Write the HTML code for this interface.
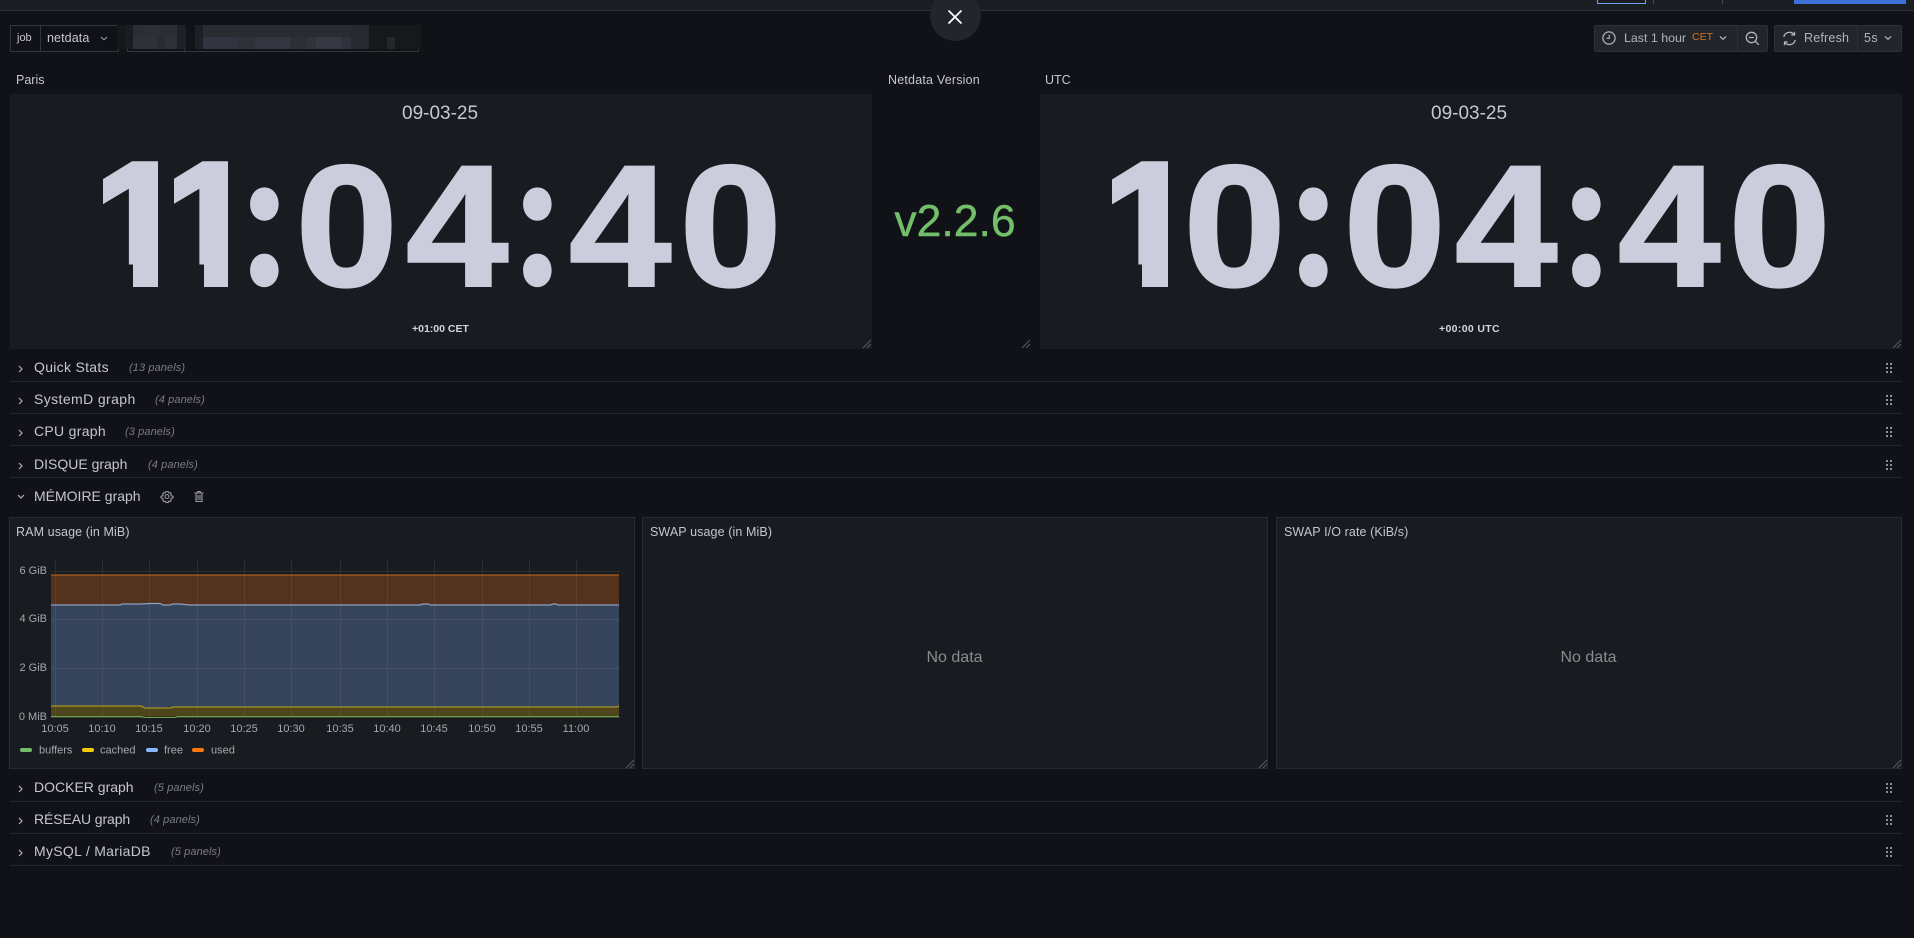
<!DOCTYPE html>
<html lang="en"><head><meta charset="utf-8"><title>Netdata dashboard</title>
<style>
*{box-sizing:border-box}
html,body{margin:0;padding:0;background:#111217;width:1914px;height:938px;overflow:hidden;font-family:"Liberation Sans",sans-serif;color:#ccccdc}
.a{position:absolute;white-space:nowrap}
.panel{position:absolute;background:#181b1f}
.title{position:absolute;font-size:12.5px;color:#c6c6d2;line-height:16px;white-space:nowrap}
.row{position:absolute;left:34px;font-size:14px;letter-spacing:.3px;color:#c6c6d2;line-height:18px;white-space:nowrap}
.cnt{position:absolute;font-size:11px;font-style:italic;color:#7b7c84;line-height:14px;letter-spacing:.1px;white-space:nowrap}
.line{position:absolute;left:10px;width:1892px;height:1px;background:#24262b}
.btn{position:absolute;background:#22252b;border:1px solid #2e3036;top:25px;height:27px}
.bt{position:absolute;font-size:12.5px;color:#b4b5bc;line-height:16px;white-space:nowrap;top:30px}
.noData{position:absolute;font-size:16px;color:#8a8b91;line-height:20px;white-space:nowrap}
.bx{position:absolute;background:#181b1f;border:1px solid #282a2f}
</style></head><body>

<div class="a" style="left:0;top:0;width:1914px;height:10px;background:#1a1d22"></div>
<div class="a" style="left:0;top:10px;width:1914px;height:1px;background:#2c2e34"></div>
<div class="a" style="left:1597px;top:0;width:49px;height:4px;border:1px solid #6e9fff;border-top:0"></div>
<div class="a" style="left:1653px;top:0;width:1px;height:4px;background:#44464c"></div>
<div class="a" style="left:1722px;top:0;width:1px;height:4px;background:#44464c"></div>
<div class="a" style="left:1794px;top:0;width:112px;height:4px;background:#3d71d9"></div>

<!-- close -->
<div class="a" style="left:930px;top:-10px;width:51px;height:51px;border-radius:50%;background:#22252b"></div>
<svg class="a" style="left:947px;top:9px" width="16" height="16" viewBox="0 0 16 16"><path d="M1.5 1.5 14.500 14.500M14.500 1.500 1.500 14.500" stroke="#fff" stroke-width="1.8" fill="none"/></svg>

<!-- variables -->
<div class="a" style="left:10px;top:25px;width:31px;height:27px;background:#111217;border:1px solid #33353b"></div>
<div class="a" style="left:17px;top:30px;font-size:11px;line-height:16px;color:#c6c7ce">job</div>
<div class="a" style="left:40px;top:25px;width:79px;height:27px;background:#111217;border:1px solid #33353b"></div>
<div class="a" style="left:47px;top:30px;font-size:12.500px;line-height:16px;letter-spacing:.1px;color:#c6c7ce">netdata</div>
<svg class="a" style="left:100px;top:34px" width="8" height="8" viewBox="0 0 8 8"><path d="M1 3 4 5.800 7 3" stroke="#9a9ba2" stroke-width="1" fill="none"/></svg>
<div class="a" style="left:127px;top:51px;width:292px;height:1px;background:#34363c"></div>
<div class="a" style="left:127px;top:48px;width:1px;height:4px;background:#34363c"></div>
<div class="a" style="left:184px;top:48px;width:1px;height:4px;background:#34363c"></div>
<div class="a" style="left:418px;top:48px;width:1px;height:4px;background:#34363c"></div>
<!-- pixelated blur -->
<svg class="a" style="left:117px;top:25px" width="304" height="24" shape-rendering="crispEdges">
<rect width="304" height="24" fill="#16181c"/>
<rect x="0" y="0" width="8" height="24" fill="#15171b"/>
<rect x="8" y="0" width="8" height="24" fill="#191c20"/>
<rect x="16" y="0" width="44" height="12" fill="#2a2d33"/><rect x="16" y="12" width="44" height="12" fill="#2e3137"/>
<rect x="27" y="0" width="16" height="12" fill="#2c2f34"/><rect x="40" y="12" width="8" height="12" fill="#2a2c32"/>
<rect x="60" y="0" width="9" height="24" fill="#1c2127"/>
<rect x="69" y="0" width="9" height="24" fill="#111317"/>
<rect x="78" y="0" width="8" height="24" fill="#1c1f25"/>
<rect x="86" y="0" width="166" height="12" fill="#2a2c32"/>
<rect x="86" y="12" width="35" height="12" fill="#323540"/>
<rect x="121" y="12" width="17" height="12" fill="#2e3138"/>
<rect x="138" y="12" width="35" height="12" fill="#343640"/>
<rect x="173" y="12" width="17" height="12" fill="#2d2f34"/>
<rect x="190" y="12" width="9" height="12" fill="#30333b"/>
<rect x="199" y="12" width="26" height="12" fill="#363942"/>
<rect x="225" y="12" width="9" height="12" fill="#2f323b"/>
<rect x="234" y="0" width="18" height="24" fill="#27292e"/>
<rect x="270" y="12" width="8" height="12" fill="#24262a"/>
</svg>

<!-- time controls -->
<div class="btn" style="left:1594px;width:144px;border-radius:2px 0 0 2px"></div>
<div class="btn" style="left:1737px;width:31px;border-radius:0 2px 2px 0"></div>
<div class="btn" style="left:1774px;width:84px;border-radius:2px 0 0 2px"></div>
<div class="btn" style="left:1857px;width:45px;border-radius:0 2px 2px 0"></div>
<svg class="a" style="left:1602px;top:31px" width="14" height="14" viewBox="0 0 14 14"><circle cx="7" cy="7" r="6.100" stroke="#b4b5bc" stroke-width="1.200" fill="none"/><path d="M7.300 3.800V7.300H4.500" stroke="#b4b5bc" stroke-width="1.200" fill="none"/></svg>
<div class="bt" style="left:1624px;font-size:12.400px">Last 1 hour</div>
<div class="a" style="left:1692px;top:30px;font-size:10.500px;line-height:14px;color:#d3761f">CET</div>
<svg class="a" style="left:1719px;top:34px" width="8" height="8" viewBox="0 0 8 8"><path d="M1 2.500 4 5.300 7 2.500" stroke="#b4b5bc" stroke-width="1.200" fill="none"/></svg>
<svg class="a" style="left:1745px;top:31px" width="15" height="15" viewBox="0 0 15 15"><circle cx="6.500" cy="6.500" r="5.200" stroke="#b4b5bc" stroke-width="1.300" fill="none"/><path d="M4 6.500H9M10.300 10.300 13.800 13.800" stroke="#b4b5bc" stroke-width="1.300" fill="none"/></svg>
<svg class="a" style="left:1782px;top:31px" width="15" height="15" viewBox="0 0 15 15"><path d="M1.800 6A5.800 5.800 0 0 1 12 3.500M13.200 9A5.800 5.800 0 0 1 3 11.500" stroke="#b4b5bc" stroke-width="1.300" fill="none"/><path d="M12.500 .8V4H9.300M2.500 14.200V11H5.700" stroke="#b4b5bc" stroke-width="1.300" fill="none"/></svg>
<div class="bt" style="left:1804px;letter-spacing:.2px">Refresh</div>
<div class="bt" style="left:1864px;letter-spacing:.4px">5s</div>
<svg class="a" style="left:1884px;top:34px" width="8" height="8" viewBox="0 0 8 8"><path d="M1 2.500 4 5.300 7 2.500" stroke="#b4b5bc" stroke-width="1.200" fill="none"/></svg>

<!-- top panels -->
<div class="panel" style="left:10px;top:94px;width:862px;height:255px"></div>
<div class="panel" style="left:1040px;top:94px;width:862px;height:255px"></div>
<div class="title" style="left:16px;top:72px">Paris</div>
<div class="title" style="left:888px;top:72px;letter-spacing:.2px">Netdata Version</div>
<div class="title" style="left:1045px;top:72px">UTC</div>
<div class="a" style="left:402px;top:103px;font-size:19px;line-height:22px;color:#c7c7d4">09-03-25</div>
<div class="a" style="left:1431px;top:103px;font-size:19px;line-height:22px;color:#c7c7d4">09-03-25</div>
<div class="a" style="left:412px;top:322px;font-size:10.500px;font-weight:700;line-height:14px;color:#d5d5e0">+01:00 CET</div>
<div class="a" style="left:1439px;top:322px;font-size:10.500px;font-weight:700;line-height:14px;letter-spacing:.35px;color:#d5d5e0">+00:00 UTC</div>

<svg class="a" style="left:0;top:0" width="1914" height="360">
<defs><clipPath id="nofoot" clipPathUnits="userSpaceOnUse">
<rect x="103" y="150" width="55" height="114.500"/>
<rect x="174" y="150" width="54" height="114.500"/>
<rect x="1112" y="150" width="56" height="114.500"/>
<rect x="133" y="264" width="25" height="23"/>
<rect x="204" y="264" width="24" height="23"/>
<rect x="1142" y="264" width="26" height="23"/>
</clipPath></defs>
<g font-family="Liberation Sans" font-weight="700" fill="#ccccdc">
<g clip-path="url(#nofoot)">
<g font-size="188" stroke="#ccccdc" stroke-width="5" transform="translate(0,286.500) scale(1,.95)">
<text y="0" x="87.500 158">11</text>
<text y="0" x="1097">1</text>
</g>
</g>
<g font-size="184" stroke="#ccccdc" stroke-width="2.500" transform="translate(0,285.800) scale(1,.94)">
<text y="0" x="295.500 406">04</text>
<text y="0" x="569 679.500">40</text>
<text y="0" x="1183.500">0</text>
<text y="0" x="1343.500 1455">04</text>
<text y="0" x="1618 1728.500">40</text>
</g>
</g>
<g font-family="Noto Sans CJK JP" font-weight="700" font-size="188" fill="#ccccdc">
<text transform="translate(239,284.700) scale(.83,.93)">:</text>
<text transform="translate(512,284.700) scale(.83,.93)">:</text>
<text transform="translate(1288,284.700) scale(.83,.93)">:</text>
<text transform="translate(1561,284.700) scale(.83,.93)">:</text>
</g>
<text x="955" y="236" text-anchor="middle" font-family="Liberation Sans" font-size="44.500" fill="#73bf69" stroke="#73bf69" stroke-width=".4">v2.2.6</text>
<g stroke="#5a5c62" stroke-width="1" fill="none">
<path d="M863 348 871 340M867 348 871 344"/><path d="M1022 348 1030 340M1026 348 1030 344"/><path d="M1893 348 1901 340M1897 348 1901 344"/>
</g>
</svg>

<!-- rows -->
<div class="row" style="top:358px">Quick Stats</div><div class="cnt" style="left:129px;top:361px">(13 panels)</div>
<div class="row" style="top:390px;letter-spacing:.4px">SystemD graph</div><div class="cnt" style="left:155px;top:393px">(4 panels)</div>
<div class="row" style="top:422px">CPU graph</div><div class="cnt" style="left:125px;top:425px">(3 panels)</div>
<div class="row" style="top:455px;letter-spacing:0">DISQUE graph</div><div class="cnt" style="left:148px;top:458px">(4 panels)</div>
<div class="row" style="top:487px;letter-spacing:0">MÉMOIRE graph</div>
<div class="row" style="top:778px;letter-spacing:0">DOCKER graph</div><div class="cnt" style="left:154px;top:781px">(5 panels)</div>
<div class="row" style="top:810px;letter-spacing:-.1px">RÉSEAU graph</div><div class="cnt" style="left:150px;top:813px">(4 panels)</div>
<div class="row" style="top:842px">MySQL / MariaDB</div><div class="cnt" style="left:171px;top:845px">(5 panels)</div>
<div class="line" style="top:381px"></div><div class="line" style="top:413px"></div><div class="line" style="top:445px"></div><div class="line" style="top:477px"></div>
<div class="line" style="top:801px"></div><div class="line" style="top:833px"></div><div class="line" style="top:865px"></div>

<svg class="a" style="left:0;top:350px" width="1914" height="530">
<g stroke="#b0b1b8" stroke-width="1.200" fill="none">
<path d="M19 16 22 19 19 22"/><path d="M19 48 22 51 19 54"/><path d="M19 80 22 83 19 86"/><path d="M19 113 22 116 19 119"/>
<path d="M18 145 21 148 24 145"/>
<path d="M19 436 22 439 19 442"/><path d="M19 468 22 471 19 474"/><path d="M19 500 22 503 19 506"/>
</g>
<g stroke="#9a9ba2" stroke-width="1.100" fill="none">
<circle cx="167" cy="146.500" r="2"/>
<path d="M167 141.500l1.200 .2 .6 1.200 1.400-.3 1 1-.4 1.300 .9 1 1.300 .5v1.300l-1.300 .5-.9 1 .4 1.300-1 1-1.400-.3-.6 1.200h-2.400l-.6-1.200-1.400 .3-1-1 .4-1.300-.9-1-1.300-.5v-1.300l1.300-.5 .9-1-.4-1.300 1-1 1.400 .3 .6-1.200z"/>
<path d="M194.500 143H203.500M196 143V151.500H202V143M197.700 143V141.500H200.300V143M198 145V150M200 145V150"/>
</g>
<g fill="#8e8f96">
<rect x="1886" y="13" width="2" height="2"/><rect x="1890" y="13" width="2" height="2"/><rect x="1886" y="17" width="2" height="2"/><rect x="1890" y="17" width="2" height="2"/><rect x="1886" y="21" width="2" height="2"/><rect x="1890" y="21" width="2" height="2"/>
<rect x="1886" y="45" width="2" height="2"/><rect x="1890" y="45" width="2" height="2"/><rect x="1886" y="49" width="2" height="2"/><rect x="1890" y="49" width="2" height="2"/><rect x="1886" y="53" width="2" height="2"/><rect x="1890" y="53" width="2" height="2"/>
<rect x="1886" y="77" width="2" height="2"/><rect x="1890" y="77" width="2" height="2"/><rect x="1886" y="81" width="2" height="2"/><rect x="1890" y="81" width="2" height="2"/><rect x="1886" y="85" width="2" height="2"/><rect x="1890" y="85" width="2" height="2"/>
<rect x="1886" y="110" width="2" height="2"/><rect x="1890" y="110" width="2" height="2"/><rect x="1886" y="114" width="2" height="2"/><rect x="1890" y="114" width="2" height="2"/><rect x="1886" y="118" width="2" height="2"/><rect x="1890" y="118" width="2" height="2"/>
<rect x="1886" y="433" width="2" height="2"/><rect x="1890" y="433" width="2" height="2"/><rect x="1886" y="437" width="2" height="2"/><rect x="1890" y="437" width="2" height="2"/><rect x="1886" y="441" width="2" height="2"/><rect x="1890" y="441" width="2" height="2"/>
<rect x="1886" y="465" width="2" height="2"/><rect x="1890" y="465" width="2" height="2"/><rect x="1886" y="469" width="2" height="2"/><rect x="1890" y="469" width="2" height="2"/><rect x="1886" y="473" width="2" height="2"/><rect x="1890" y="473" width="2" height="2"/>
<rect x="1886" y="497" width="2" height="2"/><rect x="1890" y="497" width="2" height="2"/><rect x="1886" y="501" width="2" height="2"/><rect x="1890" y="501" width="2" height="2"/><rect x="1886" y="505" width="2" height="2"/><rect x="1890" y="505" width="2" height="2"/>
</g>
</svg>

<!-- memory panels -->
<div class="bx" style="left:9px;top:517px;width:626px;height:252px"></div>
<div class="bx" style="left:642px;top:517px;width:626px;height:252px"></div>
<div class="bx" style="left:1276px;top:517px;width:626px;height:252px"></div>
<div class="title" style="left:16px;top:524px;letter-spacing:.1px">RAM usage (in MiB)</div>
<div class="title" style="left:650px;top:524px;letter-spacing:.1px">SWAP usage (in MiB)</div>
<div class="title" style="left:1284px;top:524px;letter-spacing:.1px">SWAP I/O rate (KiB/s)</div>
<div class="noData" style="left:926.500px;top:648px">No data</div>
<div class="noData" style="left:1560.500px;top:648px">No data</div>

<svg class="a" style="left:0;top:510px" width="1914" height="270" font-family="Liberation Sans" font-size="11">
<g stroke="#2a2d32" stroke-width="1">
<path d="M51 61.500H620M51 109.500H620M51 158.500H620M51 207.500H620"/>
<path d="M55.500 49V207M102.500 49V207M149.500 49V207M197.500 49V207M244.500 49V207M291.500 49V207M340.500 49V207M387.500 49V207M434.500 49V207M482.500 49V207M529.500 49V207M576.500 49V207"/>
</g>
<!-- areas -->
<path d="M51 65H619V95H51Z" fill="#53331e"/>
<path d="M51 95H120L122 94H140L150 93.500H160L163 95H170L173 94H180L190 95H420L423 94H428L430 95H550L553 94H556L558 95H619V197H510H170L160 198H145L141 196H51Z" fill="#37455c"/>
<path d="M51 196H141L145 198H170L173 197H617L619 196V206.500H51Z" fill="#4f451c"/>
<path d="M51 206H140L145 207.500H175L178 206.500H619V207.500H51Z" fill="#4a5a2a"/>
<g stroke="#ffffff" stroke-opacity=".06" stroke-width="1">
<path d="M55.500 65V207M102.500 65V207M149.500 65V207M197.500 65V207M244.500 65V207M291.500 65V207M340.500 65V207M387.500 65V207M434.500 65V207M482.500 65V207M529.500 65V207M576.500 65V207M51 109.500H619M51 158.500H619"/>
</g>
<g fill="none" stroke-width="1">
<path d="M51 65H619" stroke="#c2691e"/>
<path d="M51 95H120L122 94H140L150 93.500H160L163 95H170L173 94H180L190 95H420L423 94H428L430 95H550L553 94H556L558 95H619" stroke="#8f9fc0" stroke-width="1.200"/>
<path d="M51 196H141L145 198H170L173 197H617L619 196" stroke="#bba71f"/>
<path d="M51 206.500H140L145 207.500H175L178 206.500H619" stroke="#6fa04f"/>
</g>
<g fill="#a6a7ae" text-anchor="end">
<text x="47" y="64">6 GiB</text><text x="47" y="112">4 GiB</text><text x="47" y="161">2 GiB</text><text x="47" y="210">0 MiB</text>
</g>
<g fill="#a6a7ae" text-anchor="middle">
<text x="55" y="222">10:05</text><text x="102" y="222">10:10</text><text x="149" y="222">10:15</text><text x="197" y="222">10:20</text><text x="244" y="222">10:25</text><text x="291" y="222">10:30</text><text x="340" y="222">10:35</text><text x="387" y="222">10:40</text><text x="434" y="222">10:45</text><text x="482" y="222">10:50</text><text x="529" y="222">10:55</text><text x="576" y="222">11:00</text>
</g>
<rect x="20" y="238" width="12" height="4" rx="2" fill="#73bf69"/>
<rect x="82" y="238" width="12" height="4" rx="2" fill="#f2cc0c"/>
<rect x="146" y="238" width="12" height="4" rx="2" fill="#8ab8ff"/>
<rect x="192" y="238" width="12" height="4" rx="2" fill="#ff780a"/>
<g fill="#a6a7ae"><text x="39" y="243.500">buffers</text><text x="100" y="243.500">cached</text><text x="164" y="243.500">free</text><text x="211" y="243.500">used</text></g>
<g stroke="#5a5c62" stroke-width="1" fill="none">
<path d="M626 258 634 250M630 258 634 254"/><path d="M1259 258 1267 250M1263 258 1267 254"/><path d="M1893 258 1901 250M1897 258 1901 254"/>
</g>
</svg>
</body></html>
